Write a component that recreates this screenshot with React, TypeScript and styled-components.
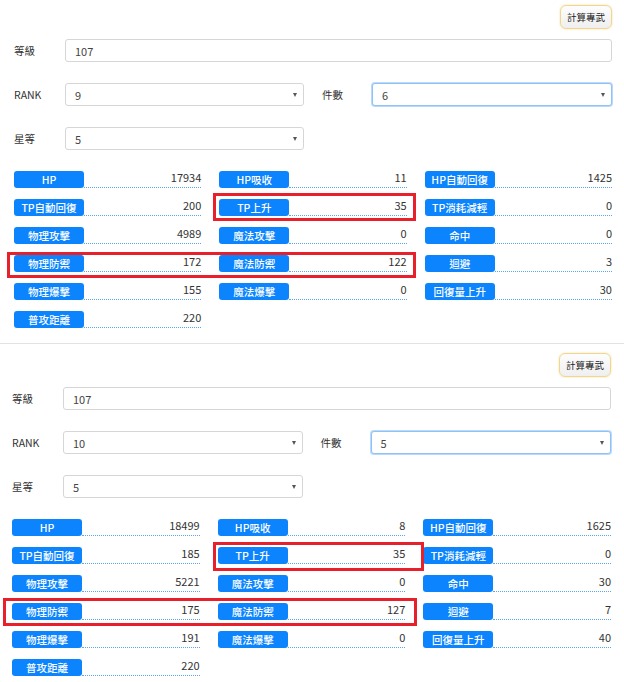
import React, { FC } from 'react'
import styled, { createGlobalStyle, css } from 'styled-components'

const GlobalStyle = createGlobalStyle`
  html, body {
    margin: 0;
    padding: 0;
    background: #fff;
  }
  body {
    font-family: "Noto Sans CJK TC", "Noto Sans", sans-serif;
    color: #333;
    font-size: 10.5px;
  }
`

interface Stat {
  label: string
  value: number | null
}

interface Mark {
  left: number
  top: number
  width: number
  height: number
}

interface PanelData {
  offset: number
  right: number
  top: number
  rank: string
  pieces: string
  stats: Stat[]
  marks: Mark[]
  divider?: boolean
}

const Page = styled.div`
  width: 624px;
  height: 682px;
  overflow: hidden;
`

const Panel = styled.section<{ $offset: number; $right: number; $top: number; $divider?: boolean }>(
  (props) => css`
    position: relative;
    box-sizing: border-box;
    padding: ${props.$top}px ${props.$right}px 0 ${props.$offset}px;
    ${props.$divider &&
    css`
      height: 344px;
      border-bottom: 1px solid #e2e2e2;
    `}
  `,
)

const Toolbar = styled.div`
  display: flex;
  justify-content: flex-end;
  height: 24px;
`

const CalcButton = styled.button`
  height: 24px;
  width: 52px;
  padding: 0;
  font-family: inherit;
  font-size: 9.5px;
  color: #222;
  background: linear-gradient(#fdfdfd, #efefef);
  border: 1px solid #f1d68f;
  border-radius: 6px;
  box-shadow: 0 0 2px rgba(240, 200, 100, 0.7);
`

const Form = styled.div`
  margin-top: 10px;
  display: flex;
  flex-direction: column;
  gap: 21px;
`

const FormRow = styled.div<{ $half?: boolean }>(
  (props) => css`
    display: grid;
    grid-template-columns: ${props.$half ? '1fr 1fr' : '1fr'};
    column-gap: 18px;
  `,
)

const Field = styled.label<{ $labelWidth?: number }>(
  (props) => css`
    display: grid;
    grid-template-columns: ${props.$labelWidth ?? 51}px 1fr;
    align-items: center;
    font-size: 10.5px;
    color: #333;
  `,
)

const boxStyle = css`
  box-sizing: border-box;
  height: 23px;
  border: 1px solid #d6d6d6;
  border-radius: 3px;
  background: #fff;
  padding: 0 9px;
  font-family: inherit;
  font-size: 11px;
  color: #444;
  display: flex;
  align-items: center;
`

const TextBox = styled.div`
  ${boxStyle}
`

const SelectBox = styled.div<{ $focus?: boolean }>(
  (props) => css`
    ${boxStyle}
    justify-content: space-between;
    ${props.$focus &&
    css`
      border-color: #8fc2f7;
      box-shadow: 0 0 0 1px rgba(120, 180, 250, 0.5);
    `}
  `,
)

const Caret = styled.span`
  width: 0;
  height: 0;
  margin-right: -3px;
  border-left: 2.5px solid transparent;
  border-right: 2.5px solid transparent;
  border-top: 4px solid #555;
`

const Stats = styled.div`
  margin-top: 21px;
  display: grid;
  grid-template-columns: repeat(3, 1fr);
  column-gap: 18px;
  row-gap: 11px;
`

const Cell = styled.div`
  display: flex;
  align-items: flex-end;
  height: 17px;
`

const Badge = styled.span`
  flex: 0 0 70px;
  height: 17px;
  box-sizing: border-box;
  background: #0b84fe;
  border-radius: 3px;
  color: #fff;
  font-size: 10.5px;
  font-weight: 500;
  line-height: 18px;
  text-align: center;
  white-space: nowrap;
`

const Value = styled.span`
  flex: 1;
  height: 17px;
  box-sizing: border-box;
  border-bottom: 1px dotted #5aa6f4;
  text-align: right;
  font-size: 11px;
  line-height: 12px;
  color: #333;
`

const Highlight = styled.div`
  position: absolute;
  box-sizing: border-box;
  border: 3px solid #e8202c;
  pointer-events: none;
`

const labels = [
  'HP', 'HP吸收', 'HP自動回復',
  'TP自動回復', 'TP上升', 'TP消耗減輕',
  '物理攻擊', '魔法攻擊', '命中',
  '物理防禦', '魔法防禦', '迴避',
  '物理爆擊', '魔法爆擊', '回復量上升',
  '普攻距離',
]

const toStats = (values: number[]): Stat[] =>
  labels.map((label, i) => ({ label, value: values[i] }))

const panels: PanelData[] = [
  {
    offset: 14,
    right: 12,
    top: 5,
    rank: '9',
    pieces: '6',
    divider: true,
    stats: toStats([17934, 11, 1425, 200, 35, 0, 4989, 0, 0, 172, 122, 3, 155, 0, 30, 220]),
    marks: [
      { left: 213, top: 193, width: 203, height: 28 },
      { left: 7, top: 252, width: 409, height: 26 },
    ],
  },
  {
    offset: 12,
    right: 13,
    top: 9,
    rank: '10',
    pieces: '5',
    stats: toStats([18499, 8, 1625, 185, 35, 0, 5221, 0, 30, 175, 127, 7, 191, 0, 40, 220]),
    marks: [
      { left: 213, top: 198, width: 211, height: 29 },
      { left: 3, top: 254, width: 414, height: 28 },
    ],
  },
]

const StatPanel: FC<{ data: PanelData }> = ({ data }) => {
  return (
    <Panel $offset={data.offset} $right={data.right} $top={data.top} $divider={data.divider}>
      <Toolbar>
        <CalcButton>計算專武</CalcButton>
      </Toolbar>
      <Form>
        <FormRow>
          <Field>
            等級
            <TextBox>107</TextBox>
          </Field>
        </FormRow>
        <FormRow $half>
          <Field>
            RANK
            <SelectBox>
              {data.rank}
              <Caret />
            </SelectBox>
          </Field>
          <Field $labelWidth={50}>
            件數
            <SelectBox $focus>
              {data.pieces}
              <Caret />
            </SelectBox>
          </Field>
        </FormRow>
        <FormRow $half>
          <Field>
            星等
            <SelectBox>
              5
              <Caret />
            </SelectBox>
          </Field>
        </FormRow>
      </Form>
      <Stats>
        {data.stats.map((item) => (
          <Cell key={item.label}>
            <Badge>{item.label}</Badge>
            <Value>{item.value}</Value>
          </Cell>
        ))}
      </Stats>
      {data.marks.map((m, i) => (
        <Highlight
          key={i}
          style={{ left: m.left, top: m.top, width: m.width, height: m.height }}
        />
      ))}
    </Panel>
  )
}

export default function App() {
  return (
    <Page>
      <GlobalStyle />
      {panels.map((p, i) => (
        <StatPanel key={i} data={p} />
      ))}
    </Page>
  )
}
